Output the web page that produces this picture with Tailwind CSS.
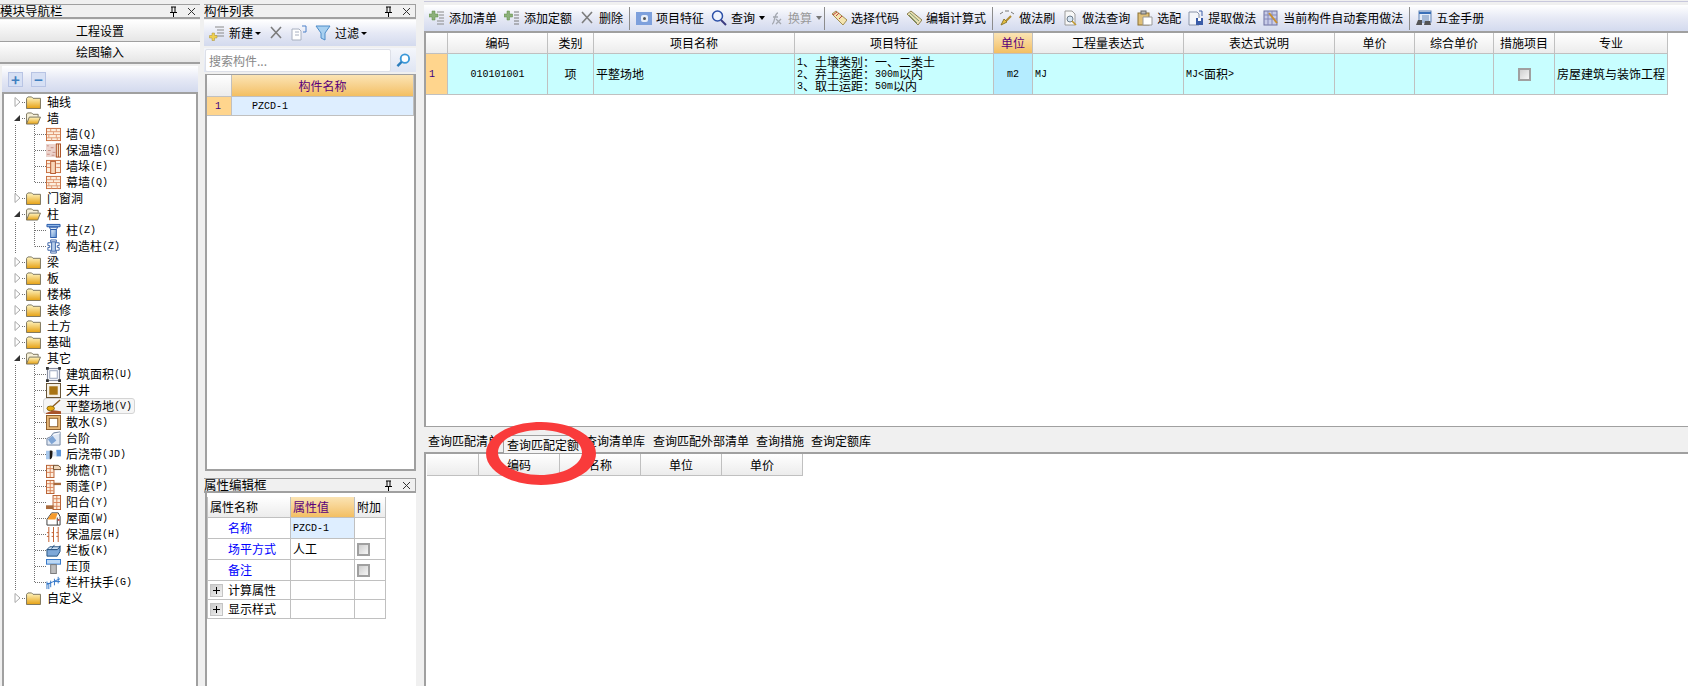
<!DOCTYPE html>
<html lang="zh-CN">
<head>
<meta charset="UTF-8" />
<title>工程量计算</title>
<script src="https://cdn.jsdelivr.net/npm/@tailwindcss/browser@4"></script>
</head>
<body class="bg-[#f0f0f0]">

<!-- icon sheet -->
<svg class="absolute w-0 h-0" aria-hidden="true">
  <defs>
    <linearGradient id="g-folder" x1="0" y1="0" x2="0" y2="1"><stop offset="0" stop-color="#fff6c4"/><stop offset="1" stop-color="#e6a112"/></linearGradient>
    <linearGradient id="g-blue" x1="0" y1="0" x2="1" y2="1"><stop offset="0" stop-color="#e8f1fb"/><stop offset="1" stop-color="#5b8fd0"/></linearGradient>
    <linearGradient id="g-check" x1="0" y1="0" x2="1" y2="1"><stop offset="0" stop-color="#c8c8c8"/><stop offset="1" stop-color="#f4f4f4"/></linearGradient>
    <symbol id="i-folder" viewBox="0 0 16 14"><path d="M.5 2.500 2 1h4l1.500 1.500h8v11H.5z" fill="url(#g-folder)" stroke="#77705a"/></symbol>
    <symbol id="i-folder-open" viewBox="0 0 16 14"><path d="M.5 13V2L2 1h4l1.500 1.500H13V5" fill="#f6f0d8" stroke="#77705a"/><path d="M.5 13 3.500 5.500h12L12.500 13z" fill="url(#g-folder)" stroke="#77705a"/></symbol>
    <symbol id="i-brick" viewBox="0 0 16 16"><rect x=".5" y="1.500" width="15" height="13" fill="#fdeedd" stroke="#c56a3a"/><path d="M1 5h14M1 8h14M1 11.500h14M5 2v3M11 2v3M8 5v3M3 8v3.500M11 8v3.500M6 11.500v3M12 11.500v3" stroke="#e09a74" fill="none"/></symbol>
    <symbol id="i-insulate" viewBox="0 0 16 16"><rect x="0" y="1" width="11" height="14" fill="#ecd3cc"/><path d="M1 3h2M5 5h3M2 8h3M7 10h3M1 12h3M6 13h3" stroke="#c58d82"/><rect x="11" y="1" width="4.500" height="14" fill="#fbe9d0" stroke="#a84c20"/><path d="M13.200 1v14" stroke="#a84c20"/></symbol>
    <symbol id="i-pier" viewBox="0 0 16 16"><rect x=".5" y="1.500" width="15" height="13" fill="#fdeedd" stroke="#c56a3a"/><path d="M1 5h4M11 5h4M1 9h4M11 9h4" stroke="#d9835a"/><rect x="5" y="2.500" width="5" height="13" fill="#f8d6b8" stroke="#b4562a"/></symbol>
    <symbol id="i-column" viewBox="0 0 16 16"><path d="M1 1.500h14v2.500H1z" fill="#8fb8e8" stroke="#2456a8"/><path d="M3.500 4.500h9L11 7H5z" fill="#dbe9f8" stroke="#2456a8"/><rect x="5" y="7" width="6" height="8.500" fill="url(#g-blue)" stroke="#2456a8"/></symbol>
    <symbol id="i-struct" viewBox="0 0 16 16"><path d="M5 1h6v3h3v3h-2v2h2v3h-3v3H5v-3H2V9h2V7H2V4h3z" fill="#fff" stroke="#3a62a8"/><rect x="6" y="3" width="4" height="10" fill="#b9cfea" stroke="#3a62a8"/></symbol>
    <symbol id="i-area" viewBox="0 0 16 16"><rect x="1.500" y="1.500" width="13" height="13" fill="#eef0f6" stroke="#7a8296"/><rect x="4" y="4" width="8" height="8" fill="#fff" stroke="#98a4bc"/><path d="M0 0h3v3H0zM13 0h3v3h-3zM0 13h3v3H0zM13 13h3v3h-3z" fill="#333"/></symbol>
    <symbol id="i-well" viewBox="0 0 16 16"><rect x=".5" y=".5" width="15" height="15" fill="#f4f0e6" stroke="#5e4a2a"/><rect x="3.500" y="3.500" width="9" height="9" fill="#a87414"/></symbol>
    <symbol id="i-level" viewBox="0 0 16 16"><path d="M15 1 6 9" stroke="#8a5a20" stroke-width="1.500"/><ellipse cx="5" cy="10" rx="4" ry="2.500" fill="#e8a810" stroke="#8a6a10"/><path d="M0 15 8 12l8 1v3H0z" fill="#a8532c"/></symbol>
    <symbol id="i-apron" viewBox="0 0 16 16"><rect x=".5" y=".5" width="15" height="15" fill="#e8b878" stroke="#8a5a26"/><rect x="3.500" y="3.500" width="9" height="9" fill="#fff" stroke="#8a5a26"/></symbol>
    <symbol id="i-steps" viewBox="0 0 16 16"><path d="M1 15V8l4-2 3-4 7-1v14z" fill="#dfe8f4" stroke="#6c7f9c"/><path d="M2 9l5-4 4 5-5 4z" fill="#7ea4d4"/><path d="M8 4l7-2" stroke="#fff"/></symbol>
    <symbol id="i-band" viewBox="0 0 16 16"><path d="M0 4h5l-1 9H0z" fill="#a8c8ec"/><path d="M11 3h5v7h-5z" fill="#5f96d8"/><path d="M4 4c3-1 4 1 3 5S5 13 4 13z" fill="#1e1a18"/><path d="M7 5h4v5H7z" fill="#dbe7f6"/></symbol>
    <symbol id="i-eave" viewBox="0 0 16 16"><rect x=".5" y="2.500" width="8" height="13" fill="#fdeedd" stroke="#b65c2e"/><path d="M1 6h7M1 10h7M4.500 3v12" stroke="#d9835a"/><path d="M8 2.500h5L16 5v2H8z" fill="#efd5b8" stroke="#6c4a2a"/></symbol>
    <symbol id="i-canopy" viewBox="0 0 16 16"><rect x=".5" y="1.500" width="8" height="14" fill="#fdeedd" stroke="#b65c2e"/><path d="M1 5h7M1 9h7M1 12.500h7M4.500 2v13" stroke="#d9835a"/><path d="M8 4h8v2.500H8z" fill="#a86a3c"/></symbol>
    <symbol id="i-balcony" viewBox="0 0 16 16"><rect x="7.500" y=".5" width="8" height="15" fill="#fdeedd" stroke="#b65c2e"/><path d="M8 4h7M8 8h7M8 12h7M11.500 1v14" stroke="#d9835a"/><path d="M0 11h8v4H0z" fill="#a86a3c"/></symbol>
    <symbol id="i-roof" viewBox="0 0 16 16"><path d="M1 15V9l5-7h7l2 4v9z" fill="#fff" stroke="#333"/><path d="M1.500 9 6 2.500h6.500L10 9z" fill="#f59a2c"/><path d="M12 15V7" stroke="#333"/><circle cx="13.500" cy="9.500" r="1" fill="#b33"/></symbol>
    <symbol id="i-layer" viewBox="0 0 16 16"><path d="M3 0v16M8 0v16M13 0v16" stroke="#c05a28" fill="none"/><path d="M1 6h14M1 10h14" stroke="#c05a28" stroke-dasharray="2 3"/></symbol>
    <symbol id="i-board" viewBox="0 0 16 16"><path d="M1 7h11l3-4v6l-3 5H1z" fill="#7ea8d8" stroke="#22507f"/><path d="M1 7l3-3h11l-3 3z" fill="#d0e2f4" stroke="#22507f"/><path d="M6 6l3-4" stroke="#22507f"/></symbol>
    <symbol id="i-coping" viewBox="0 0 16 16"><rect x=".5" y=".5" width="15" height="5" fill="#bcd8f4" stroke="#2f74c8"/><rect x="5" y="6" width="6" height="9.500" fill="#bdbdbd" stroke="#777"/></symbol>
    <symbol id="i-rail" viewBox="0 0 16 16"><path d="M1 10l14-6M1 7v8M5 6v7M9 4v7M13 2v7M3 15V9M1 9h4M9 7h6" stroke="#2f74c8" fill="none"/></symbol>
    <symbol id="t-add" viewBox="0 0 16 16"><path d="M8 2h7M10 5h5M10 8h5M8 11h7M8 14h7" stroke="#8a8a8a"/><path d="M3 1h3v3h3v3H6v3H3V7H0V4h3z" fill="#8cb07a" stroke="#5d8c42" stroke-width=".5"/></symbol>
    <symbol id="t-add2" viewBox="0 0 16 16"><path d="M10 2h5M10 5h5M10 8h5M10 11h5M10 14h5" stroke="#7a7a7a"/><path d="M3 1h2.500v3h3v3h-3v3H3V7H0V4h3z" fill="#8cb07a" stroke="#5d8c42" stroke-width=".5"/></symbol>
    <symbol id="t-x" viewBox="0 0 16 16"><path d="M3 2l10 11M13 2 3 13" stroke="#7c7c7c" stroke-width="1.600"/></symbol>
    <symbol id="t-feature" viewBox="0 0 16 16"><rect x="0" y="2" width="16" height="13" fill="#7ea0dc"/><rect x="5" y="5" width="7" height="7" rx="2" fill="#e8eef8"/><circle cx="8.500" cy="8.500" r="1.500" fill="#555"/></symbol>
    <symbol id="t-search" viewBox="0 0 16 16"><circle cx="6.500" cy="6" r="5" fill="#f0f4fc" stroke="#2c50a8" stroke-width="1.500"/><path d="M10 10l5 5" stroke="#3c3c80" stroke-width="2"/></symbol>
    <symbol id="t-fx" viewBox="0 0 16 16"><path d="M4 14c3 0 2-11 6-11M5 7h5M8 9l5 5M13 9l-5 5" stroke="#a4a8b0" stroke-width="1.300" fill="none"/></symbol>
    <symbol id="t-code" viewBox="0 0 16 16"><path d="M1 4 5 1l11 9-4 5z" fill="#f4e4b0" stroke="#a08c50"/><path d="M2 5l4-3M5 6l3-3M8 9l3-3" stroke="#c04040"/></symbol>
    <symbol id="t-calc" viewBox="0 0 16 16"><path d="M1 4 5 1l11 9-4 5z" fill="#eadfb4" stroke="#8c8050"/><path d="M4 3l9 8M3 5l8 8" stroke="#7a9a70"/></symbol>
    <symbol id="t-brush" viewBox="0 0 16 16"><path d="M1 4l3-2M12 2l3 2M6 1h4" stroke="#777" fill="none"/><path d="M12 6 7 11" stroke="#b08c30" stroke-width="2"/><path d="M2 15l3-6 3 3z" fill="#e8c040" stroke="#8c7a30"/></symbol>
    <symbol id="t-doc" viewBox="0 0 16 16"><path d="M3 1h7l3 3v11H3z" fill="#f7f7f7" stroke="#9a9a9a"/><circle cx="8" cy="9" r="3" fill="#d8e6f4" stroke="#6a7a8a"/><path d="M10 11l4 4" stroke="#c09830" stroke-width="1.600"/></symbol>
    <symbol id="t-clip" viewBox="0 0 16 16"><rect x="1" y="3" width="11" height="12" fill="#e0c078" stroke="#8c7030"/><rect x="4" y="1" width="5" height="3" fill="#bbb" stroke="#666"/><path d="M6 7h9v8H6z" fill="#fff" stroke="#999"/></symbol>
    <symbol id="t-extract" viewBox="0 0 16 16"><path d="M1 2h8l2 2v11H1z" fill="#f4f6fa" stroke="#8a94a8"/><rect x="8" y="8" width="7" height="7" fill="#3a5ca8"/><rect x="10" y="8" width="3" height="3" fill="#fff"/><path d="M11 1h3v5" stroke="#3a5ca8" fill="none"/></symbol>
    <symbol id="t-auto" viewBox="0 0 16 16"><rect x="1" y="1" width="13" height="14" fill="#c8cce8" stroke="#6c70a0"/><path d="M1 5h13M1 9h13M5 1v14M9 1v14" stroke="#8488b8"/><path d="M6 3l8 10" stroke="#c89030" stroke-width="2"/></symbol>
    <symbol id="t-book" viewBox="0 0 16 16"><rect x="3" y="1" width="12" height="11" fill="#e4ecf8" stroke="#5c80b4"/><path d="M3 3h12" stroke="#3a70b8" stroke-width="2"/><path d="M6 6h7M6 8h7M6 10h7" stroke="#6a8ab8"/><path d="M0 15l2-5h4v5zM8 15l1-4h5l1 4z" fill="#555"/></symbol>
    <symbol id="t-new" viewBox="0 0 16 16"><path d="M6 2h9M8 5h7M8 8h7M6 11h9" stroke="#8a8a8a"/><path d="M3 8h2.500v2.500H8V13H5.500v2.500H3V13H.5v-2.500H3z" fill="#f0d050" stroke="#a89030" stroke-width=".5"/></symbol>
    <symbol id="t-copy" viewBox="0 0 16 16"><path d="M1 4h7l2 2v9H1z" fill="#fff" stroke="#a8b0c0"/><path d="M4 7h4M4 10h4" stroke="#a8b0c0"/><path d="M11 1h4v6h-3" stroke="#4c80c8" fill="none"/></symbol>
    <symbol id="t-filter" viewBox="0 0 16 16"><path d="M1 1h14L10 8v7l-4-2V8z" fill="#a8d0f0" stroke="#4c8cc8"/></symbol>
    <symbol id="t-find" viewBox="0 0 16 16"><circle cx="9.500" cy="6" r="4.500" fill="#fff" stroke="#3c98d8" stroke-width="2"/><path d="M6 9.500 1.500 14" stroke="#2a7cbc" stroke-width="2.500"/></symbol>
    <symbol id="t-pin" viewBox="0 0 11 11"><path d="M3 1h5M4 1v5M7 1v5M2 6.500h7M5.500 7v4" stroke="#000" fill="none"/></symbol>
    <symbol id="t-close" viewBox="0 0 11 11"><path d="M2 2l7 7M9 2 2 9" stroke="#333" fill="none"/></symbol>
    <symbol id="t-open" viewBox="0 0 7 10"><path d="M1 .5 6 5 1 9.500z" fill="#fff" stroke="#a8a8a8"/></symbol>
    <symbol id="t-shut" viewBox="0 0 7 10"><path d="M0 8 6 2v6z" fill="#333"/></symbol>
    <symbol id="t-box" viewBox="0 0 13 13"><rect x=".5" y=".5" width="12" height="12" fill="url(#g-check)" stroke="#c4c4c4"/><path d="M3 6.500h7M6.500 3v7" stroke="#000"/></symbol>
  </defs>
</svg>

<div class="relative flex w-[1688px] h-[686px] overflow-hidden bg-[#f0f0f0] text-[12px] leading-none text-black font-['Noto_Sans_CJK_SC',sans-serif]">

  <!-- 模块导航栏 -->
  <aside class="flex w-[200px] flex-col pt-1">
    <div class="flex h-[15px] items-center justify-between border-t border-b-2 border-[#a0a0a0] pr-[3px] text-[12.500px]">
      <span>模块导航栏</span>
      <div class="flex items-center gap-[7px]">
        <svg class="w-[11px] h-[11px]"><use href="#t-pin"/></svg>
        <svg class="w-[11px] h-[11px]"><use href="#t-close"/></svg>
      </div>
    </div>
    <button class="mt-px flex h-[22px] items-center justify-center border-b border-[#a0a0a0] bg-linear-to-b from-white to-[#e6e6e6]">工程设置</button>
    <button class="flex h-[22px] items-center justify-center border-b-2 border-[#a0a0a0] bg-linear-to-b from-white to-[#e6e6e6]">绘图输入</button>
    <div class="ml-0.5 mr-0.5 mt-0.5 flex h-[26px] items-center gap-2 bg-linear-to-b from-white via-[#e6e9f5] to-[#d3daee] pl-1.5">
      <div class="flex h-[15px] w-[15px] items-center justify-center border border-[#b8c4e4] bg-[#d7e0f4] text-[15px] font-bold text-[#3f7fc0]">+</div>
      <div class="flex h-[15px] w-[15px] items-center justify-center border border-[#b8c4e4] bg-[#d7e0f4] text-[15px] font-bold text-[#3f7fc0]">−</div>
    </div>
    <div class="relative ml-0.5 mr-0.5 flex-1 border-x-2 border-t-2 border-[#a0a0a0] bg-white">
      <!-- tree guides, drawn in page coordinates -->
      <svg class="absolute left-0 top-0 h-[592px] w-[192px]" viewBox="4 94 192 592" fill="none" stroke="#707070" stroke-dasharray="1 1">
        <path d="M15.500 125V194M15.500 222V254M15.500 365V590M34.500 125V182.500M34.500 222V246.500M34.500 365V582.500"/>
        <path d="M22 102.500H26M22 118.500H26M22 198.500H26M22 214.500H26M22 262.500H26M22 278.500H26M22 294.500H26M22 310.500H26M22 326.500H26M22 342.500H26M22 358.500H26M22 598.500H26"/>
        <path d="M35 134.500H46M35 150.500H46M35 166.500H46M35 182.500H46M35 230.500H46M35 246.500H46M35 374.500H46M35 390.500H46M35 406.500H46M35 422.500H46M35 438.500H46M35 454.500H46M35 470.500H46M35 486.500H46M35 502.500H46M35 518.500H46M35 534.500H46M35 550.500H46M35 566.500H46M35 582.500H46"/>
      </svg>
      <div class="relative">
        <div class="flex h-4 items-center pl-2.5"><svg class="mr-[5px] h-2.5 w-[7px]"><use href="#t-open"/></svg><svg class="mr-1.5 h-[13px] w-[15px]"><use href="#i-folder"/></svg>轴线</div>
        <div class="flex h-4 items-center pl-2.5"><svg class="mr-[5px] h-2.5 w-[7px]"><use href="#t-shut"/></svg><svg class="mr-1.5 h-[13px] w-[15px]"><use href="#i-folder-open"/></svg>墙</div>
        <div class="flex h-4 items-center pl-[42px]"><svg class="mr-[5px] h-[15px] w-[15px]"><use href="#i-brick"/></svg>墙<span class="pt-0.5 font-['Liberation_Mono',monospace] text-[10px]">(Q)</span></div>
        <div class="flex h-4 items-center pl-[42px]"><svg class="mr-[5px] h-[15px] w-[15px]"><use href="#i-insulate"/></svg>保温墙<span class="pt-0.5 font-['Liberation_Mono',monospace] text-[10px]">(Q)</span></div>
        <div class="flex h-4 items-center pl-[42px]"><svg class="mr-[5px] h-[15px] w-[15px]"><use href="#i-pier"/></svg>墙垛<span class="pt-0.5 font-['Liberation_Mono',monospace] text-[10px]">(E)</span></div>
        <div class="flex h-4 items-center pl-[42px]"><svg class="mr-[5px] h-[15px] w-[15px]"><use href="#i-brick"/></svg>幕墙<span class="pt-0.5 font-['Liberation_Mono',monospace] text-[10px]">(Q)</span></div>
        <div class="flex h-4 items-center pl-2.5"><svg class="mr-[5px] h-2.5 w-[7px]"><use href="#t-open"/></svg><svg class="mr-1.5 h-[13px] w-[15px]"><use href="#i-folder"/></svg>门窗洞</div>
        <div class="flex h-4 items-center pl-2.5"><svg class="mr-[5px] h-2.5 w-[7px]"><use href="#t-shut"/></svg><svg class="mr-1.5 h-[13px] w-[15px]"><use href="#i-folder-open"/></svg>柱</div>
        <div class="flex h-4 items-center pl-[42px]"><svg class="mr-[5px] h-[15px] w-[15px]"><use href="#i-column"/></svg>柱<span class="pt-0.5 font-['Liberation_Mono',monospace] text-[10px]">(Z)</span></div>
        <div class="flex h-4 items-center pl-[42px]"><svg class="mr-[5px] h-[15px] w-[15px]"><use href="#i-struct"/></svg>构造柱<span class="pt-0.5 font-['Liberation_Mono',monospace] text-[10px]">(Z)</span></div>
        <div class="flex h-4 items-center pl-2.5"><svg class="mr-[5px] h-2.5 w-[7px]"><use href="#t-open"/></svg><svg class="mr-1.5 h-[13px] w-[15px]"><use href="#i-folder"/></svg>梁</div>
        <div class="flex h-4 items-center pl-2.5"><svg class="mr-[5px] h-2.5 w-[7px]"><use href="#t-open"/></svg><svg class="mr-1.5 h-[13px] w-[15px]"><use href="#i-folder"/></svg>板</div>
        <div class="flex h-4 items-center pl-2.5"><svg class="mr-[5px] h-2.5 w-[7px]"><use href="#t-open"/></svg><svg class="mr-1.5 h-[13px] w-[15px]"><use href="#i-folder"/></svg>楼梯</div>
        <div class="flex h-4 items-center pl-2.5"><svg class="mr-[5px] h-2.5 w-[7px]"><use href="#t-open"/></svg><svg class="mr-1.5 h-[13px] w-[15px]"><use href="#i-folder"/></svg>装修</div>
        <div class="flex h-4 items-center pl-2.5"><svg class="mr-[5px] h-2.5 w-[7px]"><use href="#t-open"/></svg><svg class="mr-1.5 h-[13px] w-[15px]"><use href="#i-folder"/></svg>土方</div>
        <div class="flex h-4 items-center pl-2.5"><svg class="mr-[5px] h-2.5 w-[7px]"><use href="#t-open"/></svg><svg class="mr-1.5 h-[13px] w-[15px]"><use href="#i-folder"/></svg>基础</div>
        <div class="flex h-4 items-center pl-2.5"><svg class="mr-[5px] h-2.5 w-[7px]"><use href="#t-shut"/></svg><svg class="mr-1.5 h-[13px] w-[15px]"><use href="#i-folder-open"/></svg>其它</div>
        <div class="flex h-4 items-center pl-[42px]"><svg class="mr-[5px] h-[15px] w-[15px]"><use href="#i-area"/></svg>建筑面积<span class="pt-0.5 font-['Liberation_Mono',monospace] text-[10px]">(U)</span></div>
        <div class="flex h-4 items-center pl-[42px]"><svg class="mr-[5px] h-[15px] w-[15px]"><use href="#i-well"/></svg>天井</div>
        <div class="flex h-4 items-center pl-[42px]">
          <div class="-ml-[3px] flex h-4 w-[92px] items-center rounded-[3px] border border-[#d4d4d4] bg-[#f5f5f5] pl-[2px]"><svg class="mr-[5px] h-[15px] w-[15px] shrink-0"><use href="#i-level"/></svg>平整场地<span class="pt-0.5 font-['Liberation_Mono',monospace] text-[10px]">(V)</span></div>
        </div>
        <div class="flex h-4 items-center pl-[42px]"><svg class="mr-[5px] h-[15px] w-[15px]"><use href="#i-apron"/></svg>散水<span class="pt-0.5 font-['Liberation_Mono',monospace] text-[10px]">(S)</span></div>
        <div class="flex h-4 items-center pl-[42px]"><svg class="mr-[5px] h-[15px] w-[15px]"><use href="#i-steps"/></svg>台阶</div>
        <div class="flex h-4 items-center pl-[42px]"><svg class="mr-[5px] h-[15px] w-[15px]"><use href="#i-band"/></svg>后浇带<span class="pt-0.5 font-['Liberation_Mono',monospace] text-[10px]">(JD)</span></div>
        <div class="flex h-4 items-center pl-[42px]"><svg class="mr-[5px] h-[15px] w-[15px]"><use href="#i-eave"/></svg>挑檐<span class="pt-0.5 font-['Liberation_Mono',monospace] text-[10px]">(T)</span></div>
        <div class="flex h-4 items-center pl-[42px]"><svg class="mr-[5px] h-[15px] w-[15px]"><use href="#i-canopy"/></svg>雨蓬<span class="pt-0.5 font-['Liberation_Mono',monospace] text-[10px]">(P)</span></div>
        <div class="flex h-4 items-center pl-[42px]"><svg class="mr-[5px] h-[15px] w-[15px]"><use href="#i-balcony"/></svg>阳台<span class="pt-0.5 font-['Liberation_Mono',monospace] text-[10px]">(Y)</span></div>
        <div class="flex h-4 items-center pl-[42px]"><svg class="mr-[5px] h-[15px] w-[15px]"><use href="#i-roof"/></svg>屋面<span class="pt-0.5 font-['Liberation_Mono',monospace] text-[10px]">(W)</span></div>
        <div class="flex h-4 items-center pl-[42px]"><svg class="mr-[5px] h-[15px] w-[15px]"><use href="#i-layer"/></svg>保温层<span class="pt-0.5 font-['Liberation_Mono',monospace] text-[10px]">(H)</span></div>
        <div class="flex h-4 items-center pl-[42px]"><svg class="mr-[5px] h-[15px] w-[15px]"><use href="#i-board"/></svg>栏板<span class="pt-0.5 font-['Liberation_Mono',monospace] text-[10px]">(K)</span></div>
        <div class="flex h-4 items-center pl-[42px]"><svg class="mr-[5px] h-[15px] w-[15px]"><use href="#i-coping"/></svg>压顶</div>
        <div class="flex h-4 items-center pl-[42px]"><svg class="mr-[5px] h-[15px] w-[15px]"><use href="#i-rail"/></svg>栏杆扶手<span class="pt-0.5 font-['Liberation_Mono',monospace] text-[10px]">(G)</span></div>
        <div class="flex h-4 items-center pl-2.5"><svg class="mr-[5px] h-2.5 w-[7px]"><use href="#t-open"/></svg><svg class="mr-1.5 h-[13px] w-[15px]"><use href="#i-folder"/></svg>自定义</div>
      </div>
    </div>
  </aside>

  <!-- 构件列表 + 属性编辑框 -->
  <section class="ml-1 flex w-[212px] flex-col pt-1">
    <div class="flex h-[15px] items-center justify-between border-t border-b-2 border-r border-[#a0a0a0] pr-[3px] text-[12.500px]">
      <span>构件列表</span>
      <div class="flex items-center gap-[7px]">
        <svg class="w-[11px] h-[11px]"><use href="#t-pin"/></svg>
        <svg class="w-[11px] h-[11px]"><use href="#t-close"/></svg>
      </div>
    </div>
    <div class="mt-px flex h-[26px] items-center bg-linear-to-b from-white via-[#e6e9f5] to-[#d3daee] pl-[5px]">
      <svg class="h-4 w-4"><use href="#t-new"/></svg>
      <span class="ml-1">新建</span>
      <span class="ml-[2px] h-0 w-0 border-x-[3px] border-t-[3px] border-x-transparent border-t-black"></span>
      <svg class="ml-[7px] h-4 w-4"><use href="#t-x"/></svg>
      <svg class="ml-[7px] h-4 w-4"><use href="#t-copy"/></svg>
      <svg class="ml-2 h-4 w-4"><use href="#t-filter"/></svg>
      <span class="ml-1">过滤</span>
      <span class="ml-[2px] h-0 w-0 border-x-[3px] border-t-[3px] border-x-transparent border-t-black"></span>
    </div>
    <div class="mt-0.5 flex h-6 items-center bg-linear-to-b from-[#f4f6fb] to-[#dfe5f3]">
      <input class="ml-px h-[23px] w-[186px] rounded-[2px] border border-[#dde0e8] bg-white pl-[3px] text-[12px] outline-none placeholder:text-[#888]" placeholder="搜索构件...">
      <svg class="ml-[5px] h-[15px] w-[15px]"><use href="#t-find"/></svg>
    </div>
    <div class="ml-px mt-0.5 h-[397px] border-x-2 border-t border-b-2 border-[#a0a0a0] bg-white">
      <div class="grid grid-cols-[25px_182px]">
        <div class="h-[22px] border-r border-b border-[#c0c0c0] bg-linear-to-b from-white to-[#ececec]"></div>
        <div class="flex h-[22px] items-center justify-center border-r border-b border-[#c0c0c0] bg-linear-to-b from-[#fbe4b4] to-[#f3bf62] text-[#5a007a]">构件名称</div>
        <div class="flex h-[19px] items-center border-r border-b border-[#c0c0c0] bg-[#ffd58d] pl-2 pt-0.5 font-['Liberation_Mono',monospace] text-[10px] text-[#400080]">1</div>
        <div class="flex h-[19px] items-center border-r border-b border-[#c0c0c0] bg-[#deeeff] pl-5 pt-0.5 font-['Liberation_Mono',monospace] text-[10px]">PZCD-1</div>
      </div>
    </div>
    <div class="mt-[7px] flex h-[15px] items-center justify-between border-t border-b-2 border-r border-[#a0a0a0] pr-[3px] text-[12.500px]">
      <span>属性编辑框</span>
      <div class="flex items-center gap-[7px]">
        <svg class="w-[11px] h-[11px]"><use href="#t-pin"/></svg>
        <svg class="w-[11px] h-[11px]"><use href="#t-close"/></svg>
      </div>
    </div>
    <div class="ml-px flex-1 border-l-2 border-[#a0a0a0] bg-white pt-1">
      <div class="grid w-[179px] grid-cols-[83px_64px_31px] border-l border-[#c0c0c0]">
        <div class="flex h-[21px] items-center border-r border-b border-[#c0c0c0] bg-linear-to-b from-white to-[#ececec] pl-[2px]">属性名称</div>
        <div class="flex h-[21px] items-center border-r border-b border-[#c0c0c0] bg-linear-to-b from-[#fbe4b4] to-[#f3bf62] pl-[2px] text-[#5a007a]">属性值</div>
        <div class="flex h-[21px] items-center border-r border-b border-[#c0c0c0] bg-linear-to-b from-white to-[#ececec] pl-[2px]">附加</div>

        <div class="flex h-[21px] items-center border-r border-b border-[#c0c0c0] pl-5 text-[#0000ff]">名称</div>
        <div class="flex h-[21px] items-center border-r border-b border-[#c0c0c0] bg-[#deeeff] pl-[2px] pt-0.5 font-['Liberation_Mono',monospace] text-[10px]">PZCD-1</div>
        <div class="h-[21px] border-r border-b border-[#c0c0c0]"></div>

        <div class="flex h-[21px] items-center border-r border-b border-[#c0c0c0] pl-5 text-[#0000ff]">场平方式</div>
        <div class="flex h-[21px] items-center border-r border-b border-[#c0c0c0] pl-[2px]">人工</div>
        <div class="flex h-[21px] items-center border-r border-b border-[#c0c0c0] pl-[2px]"><span class="h-[13px] w-[13px] border-2 border-[#a0a0a0] bg-linear-to-br from-[#cfcfcf] to-[#f6f6f6]"></span></div>

        <div class="flex h-[21px] items-center border-r border-b border-[#c0c0c0] pl-5 text-[#0000ff]">备注</div>
        <div class="h-[21px] border-r border-b border-[#c0c0c0]"></div>
        <div class="flex h-[21px] items-center border-r border-b border-[#c0c0c0] pl-[2px]"><span class="h-[13px] w-[13px] border-2 border-[#a0a0a0] bg-linear-to-br from-[#cfcfcf] to-[#f6f6f6]"></span></div>

        <div class="flex h-[19px] items-center border-r border-b border-[#c0c0c0] pl-[2px]"><svg class="mr-[5px] h-[13px] w-[13px]"><use href="#t-box"/></svg>计算属性</div>
        <div class="h-[19px] border-r border-b border-[#c0c0c0]"></div>
        <div class="h-[19px] border-r border-b border-[#c0c0c0]"></div>

        <div class="flex h-[19px] items-center border-r border-b border-[#c0c0c0] pl-[2px]"><svg class="mr-[5px] h-[13px] w-[13px]"><use href="#t-box"/></svg>显示样式</div>
        <div class="h-[19px] border-r border-b border-[#c0c0c0]"></div>
        <div class="h-[19px] border-r border-b border-[#c0c0c0]"></div>
      </div>
    </div>
  </section>

  <!-- 清单 / 定额 -->
  <main class="ml-2 flex w-[1264px] flex-col pt-px">
    <div class="h-px bg-[#c8c8dc]"></div>
    <div class="mt-[3px] flex h-[26px] items-center gap-[7px] whitespace-nowrap bg-linear-to-b from-white via-[#e6e9f5] to-[#d3daee] pl-[5px]">
      <div class="flex items-center gap-1"><svg class="h-4 w-4"><use href="#t-add"/></svg>添加清单</div>
      <div class="flex items-center gap-1"><svg class="h-4 w-4"><use href="#t-add2"/></svg>添加定额</div>
      <div class="flex items-center gap-1"><svg class="h-4 w-4"><use href="#t-x"/></svg>删除</div>
      <div class="-mx-px h-[23px] w-px bg-[#8c8c8c]"></div>
      <div class="flex items-center gap-1"><svg class="h-4 w-4"><use href="#t-feature"/></svg>项目特征</div>
      <div class="flex items-center gap-1"><svg class="h-4 w-4"><use href="#t-search"/></svg>查询<span class="h-0 w-0 border-x-[3.500px] border-t-4 border-x-transparent border-t-black"></span></div>
      <div class="-ml-1 flex items-center gap-1 text-[#9a9a9a]"><svg class="h-4 w-4"><use href="#t-fx"/></svg>换算<span class="h-0 w-0 border-x-[3.500px] border-t-4 border-x-transparent border-t-[#777]"></span></div>
      <div class="-ml-[5px] -mr-px h-[23px] w-px bg-[#8c8c8c]"></div>
      <div class="flex items-center gap-1"><svg class="h-4 w-4"><use href="#t-code"/></svg>选择代码</div>
      <div class="flex items-center gap-1"><svg class="h-4 w-4"><use href="#t-calc"/></svg>编辑计算式</div>
      <div class="-mx-px h-[23px] w-px bg-[#8c8c8c]"></div>
      <div class="flex items-center gap-1"><svg class="h-4 w-4"><use href="#t-brush"/></svg>做法刷</div>
      <div class="flex items-center gap-1"><svg class="h-4 w-4"><use href="#t-doc"/></svg>做法查询</div>
      <div class="flex items-center gap-1"><svg class="h-4 w-4"><use href="#t-clip"/></svg>选配</div>
      <div class="flex items-center gap-1"><svg class="h-4 w-4"><use href="#t-extract"/></svg>提取做法</div>
      <div class="flex items-center gap-1"><svg class="h-4 w-4"><use href="#t-auto"/></svg>当前构件自动套用做法</div>
      <div class="-mx-px h-[23px] w-px bg-[#8c8c8c]"></div>
      <div class="flex items-center gap-1"><svg class="h-4 w-4"><use href="#t-book"/></svg>五金手册</div>
    </div>

    <div class="h-[395px] border-l-2 border-t-2 border-[#a0a0a0] bg-white">
      <div class="grid w-[1242px] grid-cols-[22px_100px_46px_201px_199px_39px_151px_151px_80px_79px_61px_113px]">
        <div class="h-[21px] border-r border-b border-[#c0c0c0] bg-linear-to-b from-white to-[#ececec]"></div>
        <div class="flex h-[21px] items-center justify-center border-r border-b border-[#c0c0c0] bg-linear-to-b from-white to-[#ececec]">编码</div>
        <div class="flex h-[21px] items-center justify-center border-r border-b border-[#c0c0c0] bg-linear-to-b from-white to-[#ececec]">类别</div>
        <div class="flex h-[21px] items-center justify-center border-r border-b border-[#c0c0c0] bg-linear-to-b from-white to-[#ececec]">项目名称</div>
        <div class="flex h-[21px] items-center justify-center border-r border-b border-[#c0c0c0] bg-linear-to-b from-white to-[#ececec]">项目特征</div>
        <div class="flex h-[21px] items-center justify-center border-r border-b border-[#c0c0c0] bg-linear-to-b from-[#fbe4b4] to-[#f3bf62] text-[#5a007a]">单位</div>
        <div class="flex h-[21px] items-center justify-center border-r border-b border-[#c0c0c0] bg-linear-to-b from-white to-[#ececec]">工程量表达式</div>
        <div class="flex h-[21px] items-center justify-center border-r border-b border-[#c0c0c0] bg-linear-to-b from-white to-[#ececec]">表达式说明</div>
        <div class="flex h-[21px] items-center justify-center border-r border-b border-[#c0c0c0] bg-linear-to-b from-white to-[#ececec]">单价</div>
        <div class="flex h-[21px] items-center justify-center border-r border-b border-[#c0c0c0] bg-linear-to-b from-white to-[#ececec]">综合单价</div>
        <div class="flex h-[21px] items-center justify-center border-r border-b border-[#c0c0c0] bg-linear-to-b from-white to-[#ececec]">措施项目</div>
        <div class="flex h-[21px] items-center justify-center border-r border-b border-[#c0c0c0] bg-linear-to-b from-white to-[#ececec]">专业</div>

        <div class="flex h-[41px] items-center border-r border-b border-[#c0c0c0] bg-[#ffd58d] pl-[3px] pt-0.5 font-['Liberation_Mono',monospace] text-[10px] text-[#400080]">1</div>
        <div class="flex h-[41px] items-center justify-center border-r border-b border-[#c0c0c0] bg-[#c8feff] pt-0.5 font-['Liberation_Mono',monospace] text-[10px]">010101001</div>
        <div class="flex h-[41px] items-center justify-center border-r border-b border-[#c0c0c0] bg-[#c8feff]">项</div>
        <div class="flex h-[41px] items-center border-r border-b border-[#c0c0c0] bg-[#c8feff] pl-[2px]">平整场地</div>
        <div class="flex h-[41px] flex-col justify-center border-r border-b border-[#c0c0c0] bg-[#c8feff] pl-[2px]">
          <div class="flex h-3 items-center"><span class="pt-0.5 font-['Liberation_Mono',monospace] text-[10px]">1</span>、土壤类别：一、二类土</div>
          <div class="flex h-3 items-center"><span class="pt-0.5 font-['Liberation_Mono',monospace] text-[10px]">2</span>、弃土运距：<span class="pt-0.5 font-['Liberation_Mono',monospace] text-[10px]">300m</span>以内</div>
          <div class="flex h-3 items-center"><span class="pt-0.5 font-['Liberation_Mono',monospace] text-[10px]">3</span>、取土运距：<span class="pt-0.5 font-['Liberation_Mono',monospace] text-[10px]">50m</span>以内</div>
        </div>
        <div class="flex h-[41px] items-center justify-center border-r border-b border-[#c0c0c0] bg-[#b4ecff] pt-0.5 font-['Liberation_Mono',monospace] text-[10px]">m2</div>
        <div class="flex h-[41px] items-center border-r border-b border-[#c0c0c0] bg-[#c8feff] pl-[2px] pt-0.5 font-['Liberation_Mono',monospace] text-[10px]">MJ</div>
        <div class="flex h-[41px] items-center border-r border-b border-[#c0c0c0] bg-[#c8feff] pl-[2px]"><span class="pt-0.5 font-['Liberation_Mono',monospace] text-[10px]">MJ&lt;</span>面积<span class="pt-0.5 font-['Liberation_Mono',monospace] text-[10px]">&gt;</span></div>
        <div class="h-[41px] border-r border-b border-[#c0c0c0] bg-[#c8feff]"></div>
        <div class="h-[41px] border-r border-b border-[#c0c0c0] bg-[#c8feff]"></div>
        <div class="flex h-[41px] items-center justify-center border-r border-b border-[#c0c0c0] bg-[#c8feff]"><span class="h-[13px] w-[13px] border-2 border-[#a0a0a0] bg-linear-to-br from-[#cfcfcf] to-[#f6f6f6]"></span></div>
        <div class="flex h-[41px] items-center border-r border-b border-[#c0c0c0] bg-[#c8feff] pl-0.5 whitespace-nowrap">房屋建筑与装饰工程</div>
      </div>
    </div>

    <div class="flex h-[26px] items-start whitespace-nowrap border-t border-[#a0a0a0] pl-1">
      <span class="mt-2">查询匹配清单</span>
      <span class="relative z-10 ml-[3px] mt-2 flex h-[18px] items-center border-x border-t border-[#a0a0a0] bg-[#f4f4f4] px-[3px]">查询匹配定额</span>
      <span class="ml-0.5 mt-2">查询清单库</span>
      <span class="ml-2 mt-2">查询匹配外部清单</span>
      <span class="ml-[7px] mt-2">查询措施</span>
      <span class="ml-[7px] mt-2">查询定额库</span>
    </div>

    <div class="flex-1 border-l-2 border-t-2 border-[#a0a0a0] bg-white pl-px">
      <div class="grid w-[376px] grid-cols-[52px_81px_81px_81px_81px]">
        <div class="h-[22px] border-r border-b border-[#c0c0c0] bg-linear-to-b from-white to-[#ececec]"></div>
        <div class="flex h-[22px] items-center justify-center border-r border-b border-[#c0c0c0] bg-linear-to-b from-white to-[#ececec]">编码</div>
        <div class="flex h-[22px] items-center justify-center border-r border-b border-[#c0c0c0] bg-linear-to-b from-white to-[#ececec]">名称</div>
        <div class="flex h-[22px] items-center justify-center border-r border-b border-[#c0c0c0] bg-linear-to-b from-white to-[#ececec]">单位</div>
        <div class="flex h-[22px] items-center justify-center border-r border-b border-[#c0c0c0] bg-linear-to-b from-white to-[#ececec]">单价</div>
      </div>
    </div>
  </main>

  <!-- red hand-drawn circle over the tab -->
  <svg class="pointer-events-none absolute left-0 top-0 z-20 h-[686px] w-[1688px]" viewBox="0 0 1688 686">
    <path fill-rule="evenodd" fill="#f93b3b" d="M486 453.500C486 436 510 422 541 422S596 436 596 453.500 572 485 541 485 486 471 486 453.500ZM498 452.500C498 465 517 475 540 475S582 465 582 452.500 563 430 540 430 498 440 498 452.500Z"/>
  </svg>
</div>
</body>
</html>
